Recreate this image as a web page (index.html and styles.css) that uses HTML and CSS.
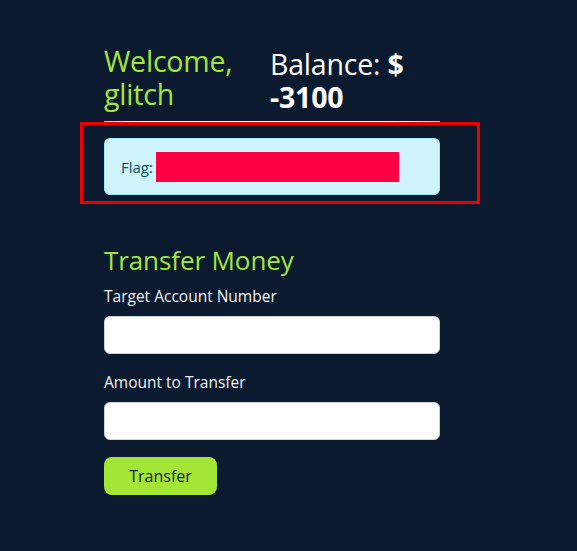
FILE: index.html
```html
<!DOCTYPE html>
<html>
<head>
<meta charset="utf-8">
<link rel="stylesheet" href="styles.css">
</head>
<body>
<main class="wrap">
  <header class="head">
    <h1 class="welcome">Welcome, glitch</h1>
    <h2 class="balance">Balance: <strong>$ -3100</strong></h2>
  </header>
  <div class="rule"></div>
  <div class="flag-area">
    <div class="alert">
      <span class="flag-label">Flag:</span>
      <span class="redact"></span>
    </div>
    <div class="highlight"></div>
  </div>
  <section class="transfer">
    <h2 class="section-title">Transfer Money</h2>
    <form class="form">
      <label class="label" for="acct">Target Account Number</label>
      <input class="input" id="acct" type="text">
      <label class="label" for="amt">Amount to Transfer</label>
      <input class="input" id="amt" type="text">
      <button class="btn" type="button">Transfer</button>
    </form>
  </section>
</main>
</body>
</html>
```
FILE: styles.css
```css
html, body {
  margin: 0;
  padding: 0;
  background: #0c1a30;
  font-family: "Open Sans", "Noto Sans", sans-serif;
  color: #ffffff;
}
.wrap {
  width: 336px;
  margin-left: 104px;
  padding-top: 45px;
}
.head {
  display: flex;
  justify-content: space-between;
  align-items: flex-start;
}
.welcome {
  margin: 0;
  width: 156px;
  font-size: 28.5px;
  font-weight: 400;
  line-height: 33px;
  color: #a3e635;
  letter-spacing: -0.2px;
}
.balance {
  margin: 3px 0 0 0;
  width: 170px;
  font-size: 28.5px;
  font-weight: 400;
  line-height: 33px;
  color: #ffffff;
  letter-spacing: -0.2px;
}
.balance strong {
  font-weight: 700;
}
.rule {
  margin-top: 7px;
  height: 1px;
  background: linear-gradient(90deg, #a3e635 0%, #ffffff 12%, #ffffff 85%, #a3e635 100%);
}
.flag-area {
  position: relative;
  margin-top: 16px;
}
.alert {
  box-sizing: border-box;
  height: 57px;
  background: #cff4fc;
  border: 1px solid #9eeaf9;
  border-radius: 6px;
  display: flex;
  align-items: center;
  padding-left: 16px;
}
.flag-label {
  color: #055160;
  font-size: 15px;
  margin-right: 3px;
}
.redact {
  display: inline-block;
  width: 243px;
  height: 30px;
  background: #ff0044;
}
.highlight {
  position: absolute;
  left: -24px;
  top: -16px;
  width: 400px;
  height: 82px;
  box-sizing: border-box;
  border: 3px solid #ee0000;
}
.transfer {
  margin-top: 49px;
}
.section-title {
  margin: 0;
  font-size: 26px;
  font-weight: 400;
  line-height: 32px;
  color: #a3e635;
  letter-spacing: -0.1px;
}
.form {
  display: flex;
  flex-direction: column;
  align-items: flex-start;
  margin-top: 10px;
}
.label {
  font-size: 15.5px;
  line-height: 20px;
  color: #f2f2f2;
}
.input + .label {
  margin-top: 1px;
}
.input {
  box-sizing: border-box;
  width: 336px;
  height: 38px;
  margin-top: 10px;
  margin-bottom: 17px;
  border: 1px solid #ced4da;
  border-radius: 6px;
  background: #ffffff;
}
.btn {
  width: 113px;
  height: 38px;
  border: none;
  border-radius: 8px;
  background: #a3e635;
  color: #1a1a2e;
  font-family: inherit;
  font-size: 16px;
}
```
